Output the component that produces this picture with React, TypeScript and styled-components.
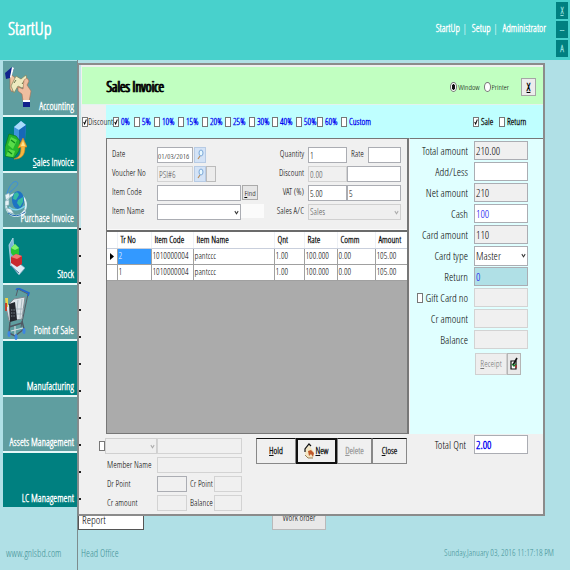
import React from 'react';
import styled, { createGlobalStyle, css } from 'styled-components';

const narrow = '"Open Sans Condensed Light", "Roboto Condensed", "Liberation Sans", sans-serif';

const Global = createGlobalStyle`
  *, *::before, *::after { box-sizing: border-box; }
  body { margin: 0; background: #b0e0e6; font-family: ${narrow}; font-size: 9px; line-height: 12px; color: #000; }
  button, input, select { font: inherit; color: inherit; margin: 0; border-radius: 0; min-width: 0; }
  a { color: inherit; text-decoration: none; }
  h1, h2 { margin: 0; font-weight: 700; }
`;

/* ---------- page frame ---------- */
const Page = styled.div`
  min-height: 100vh;
  display: flex;
  flex-direction: column;
`;
const TopBar = styled.header`
  display: flex;
  align-items: center;
  height: 60px;
  padding: 0 2px 4px 8px;
  background: #48d1cc;
  color: #fff;
`;
const Brand = styled.h1`
  flex: 1;
  font-size: 18px;
  line-height: 24px;
  font-weight: 700;
`;
const TopLinks = styled.nav`
  display: flex;
  gap: 3px;
  margin-right: 10px;
  font-size: 10px;
  font-weight: 700;
  white-space: nowrap;
  span { font-weight: 400; margin-right: 2px; }
`;
const WindowKeys = styled.div`
  display: flex;
  flex-direction: column;
  gap: 2px;
  padding-top: 3px;
`;
const WindowKey = styled.button`
  width: 12px;
  height: 17px;
  padding: 0;
  border: 0;
  background: #008080;
  color: #8fdfdb;
  font-size: 9px;
  font-weight: 700;
`;
const Body = styled.div`
  flex: 1;
  display: flex;
`;
const Side = styled.aside`
  flex: 0 0 78px;
  min-width: 0;
  display: flex;
  flex-direction: column;
  justify-content: space-between;
  padding: 1px 0 0 3px;
  border-right: 1px solid #7d8c8e;
`;
const Menu = styled.nav`
  display: flex;
  flex-direction: column;
  gap: 2px;
  background: #e4f7f7;
`;
const MenuItem = styled.a<{ $dark?: boolean }>`
  display: flex;
  height: 54px;
  position: relative;
  align-items: flex-end;
  justify-content: flex-end;
  padding: 0 3px 3px 0;
  background: ${p => (p.$dark ? '#008080' : '#5f9ea0')};
  color: #fff;
  font-size: 10px;
  font-weight: 700;
  white-space: nowrap;
  svg { position: absolute; left: 2px; top: 3px; }
  span { position: relative; }
`;
const FootText = styled.div<{ $small?: boolean }>`
  padding: 0 4px 11px 3px;
  font-size: ${p => (p.$small ? 9 : 10)}px;
  color: #3f9095;
  white-space: nowrap;
`;
const Main = styled.main`
  flex: 1;
  min-width: 0;
  display: flex;
  flex-direction: column;
`;
const Behind = styled.div`
  display: flex;
  justify-content: space-between;
  height: 14px;
  padding-right: 244px;
`;
const Peek = styled.button<{ $raised?: boolean }>`
  display: flex;
  align-items: flex-end;
  justify-content: ${p => (p.$raised ? 'center' : 'flex-start')};
  width: ${p => (p.$raised ? 54 : 66)}px;
  height: 14px;
  padding: 0 3px ${p => (p.$raised ? 5 : 3)}px;
  overflow: hidden;
  border: 1px solid ${p => (p.$raised ? '#b9b9b9' : '#555')};
  border-top: 0;
  background: ${p => (p.$raised ? '#e8e8e8' : '#fff')};
  font-size: ${p => (p.$raised ? 9 : 11)}px;
  line-height: 12px;
`;
const StatusBar = styled.footer`
  flex: 1;
  display: flex;
  align-items: flex-end;
  justify-content: space-between;
  padding-right: 12px;
`;

/* ---------- invoice window ---------- */
const Invoice = styled.section`
  display: flex;
  margin: 3px 25px 0 0;
  border: solid #8b8b8b;
  border-width: 2px 2px 2px 1px;
  background: #f0f0f0;
`;
const Rail = styled.div`
  flex: 0 0 3px;
  padding-top: 163px;
  background: linear-gradient(#c4e6ea, #c4e6ea) 0 0 / 2px 163px no-repeat;
  &::after {
    content: '';
    display: block;
    width: 2px;
    height: 276px;
    background: repeating-linear-gradient(#222 0 2px, transparent 2px 27px);
  }
`;
const Sheet = styled.div`
  flex: 1;
  min-width: 0;
  padding-top: 2px;
`;
const TitleBar = styled.div`
  display: flex;
  align-items: center;
  height: 38px;
  padding: 3px 7px 0 24px;
  background: #c1ffc1;
  border-bottom: 1px solid #e4f3ee;
`;
const Title = styled.h2`
  flex: 1;
  font-size: 14px;
  line-height: 20px;
  color: #000;
  text-shadow: 1px 0 0 #000;
`;
const Choice = styled.label`
  display: flex;
  align-items: center;
  gap: 1px;
  margin-right: 4px;
  font-size: 8px;
`;
const mark = (shape: string) =>
  `url("data:image/svg+xml,%3Csvg xmlns='http://www.w3.org/2000/svg' viewBox='0 0 6 10' preserveAspectRatio='none'%3E${shape}%3C/svg%3E")`;
const tick = mark("%3Cpath d='M1 5l1.5 2.5L5 2' fill='none' stroke='%23000' stroke-width='1.4'/%3E");
const arrow = (colour: string) =>
  mark(`%3Cpath d='M1 3.5l2 3 2-3' fill='none' stroke='%23${colour}' stroke-width='1.2'/%3E`);
const Radio = styled.input.attrs({ type: 'radio' })`
  appearance: none;
  width: 7px;
  height: 10px;
  border: 1px solid #777;
  border-radius: 50%;
  background: #fff;
  &:checked { background: radial-gradient(ellipse, #111 45%, #fff 55%); }
`;
const Check = styled.input.attrs({ type: 'checkbox' })`
  appearance: none;
  flex: none;
  width: 6px;
  height: 10px;
  border: 1px solid #777;
  background: #fff;
  &:checked { background: #fff ${tick} center / 100% 100% no-repeat; }
`;
const CloseKey = styled.button`
  width: 15px;
  height: 18px;
  margin-left: 8px;
  padding: 0;
  border: 1px solid #a5a5a5;
  background: #ececec;
  font-weight: 700;
  font-size: 11px;
  color: #000;
`;
const Rates = styled.div`
  display: flex;
  align-items: center;
  height: 33px;
  padding-right: 14px;
  background: #bfffff;
`;
const Rate = styled.label<{ $w: number; $tone?: 'plain' | 'black' }>`
  display: flex;
  align-items: center;
  gap: 2px;
  flex: 0 0 ${p => p.$w}px;
  white-space: nowrap;
  font-weight: 700;
  color: #0000f0;
  ${p => p.$tone === 'black' && css`color: #111;`}
  ${p => p.$tone === 'plain' && css`
    gap: 0;
    height: 33px;
    min-width: 0;
    color: #000;
    font-weight: 400;
    background: linear-gradient(90deg, #f0f0f0 24px, transparent 24px);
  `}
`;
const Push = styled.span`
  flex: 1;
`;
const Middle = styled.div`
  display: flex;
  padding-left: 24px;
`;
const Work = styled.div`
  flex: 1;
  min-width: 0;
  border: solid #777;
  border-width: 1px 2px 1px 1px;
  display: flex;
  flex-direction: column;
`;
const Form = styled.div`
  display: flex;
  justify-content: space-between;
  padding: 8px 6px 9px 5px;
  border-bottom: 1px solid #fafafa;
`;
const Col = styled.div`
  display: flex;
  flex-direction: column;
  gap: 3px;
`;
const Line = styled.div<{ $label: number; $right?: boolean }>`
  display: grid;
  grid-template-columns: ${p => p.$label}px 1fr;
  column-gap: ${p => (p.$right ? 4 : 0)}px;
  height: 16px;
  white-space: nowrap;
  > label { text-align: ${p => (p.$right ? 'right' : 'left')}; line-height: 14px; }
  > div { display: flex; }
`;
const Field = styled.input<{ $w: number; $tall?: boolean; $blue?: boolean }>`
  flex: 0 0 ${p => p.$w}px;
  width: ${p => p.$w}px;
  height: ${p => (p.$tall ? 19 : 16)}px;
  padding: 0 1px;
  border: 1px solid #abadb3;
  background: #fff;
  color: ${p => (p.$blue ? '#0000f0' : '#000')};
  font-size: ${p => (p.$tall ? 11 : 9)}px;
  &:read-only { background: #f0f0f0; }
  &:disabled { background: #f0f0f0; border-color: #d3d3d3; color: #555; }
`;
const DateField = styled(Field)`
  padding: 0;
  font-size: 8px;
`;
const ReturnField = styled(Field)`
  &:read-only { background: #b0e0e6; }
`;
const Pick = styled.select<{ $w: number; $tall?: boolean }>`
  appearance: none;
  flex: 0 0 ${p => p.$w}px;
  width: ${p => p.$w}px;
  height: ${p => (p.$tall ? 20 : 16)}px;
  padding: 0 8px 0 1px;
  border: 1px solid #abadb3;
  font-size: ${p => (p.$tall ? 11 : 9)}px;
  background: #fff ${arrow('333')} right 1px center / 5px 9px no-repeat;
  &:disabled {
    background: #efefef ${arrow('aaa')} right 1px center / 5px 9px no-repeat;
    border-color: #d0d0d0;
    color: #555;
    opacity: 1;
  }
`;
const Lookup = styled.button<{ $plain?: boolean }>`
  width: ${p => (p.$plain ? 10 : 12)}px;
  height: 16px;
  margin-left: ${p => (p.$plain ? 0 : 1)}px;
  padding: 0;
  border: 1px solid ${p => (p.$plain ? '#bbb' : '#b7cbe4')};
  background: ${p => (p.$plain ? '#ececec' : '#d4e3f6')};
`;
const Find = styled.button`
  width: 16px;
  height: 15px;
  margin-left: 1px;
  padding: 0;
  border: 1px solid #aaa;
  background: #e6e6e6;
  font-size: 8px;
`;
const Blank = styled.span`
  width: 23px;
  height: 14px;
  background: #fbfbfb;
`;
const InlineLabel = styled.label<{ $w: number }>`
  flex: 0 0 ${p => p.$w}px;
  padding-left: 4px;
  line-height: 14px;
`;
const GridArea = styled.div`
  flex: 1;
  min-height: 203px;
  border-top: 2px solid #6b6b6b;
  background: #ababab;
`;
const Table = styled.table`
  width: 100%;
  table-layout: fixed;
  border-collapse: collapse;
  background: #fff;
  th, td {
    height: 16px;
    padding: 0 1px;
    border: solid #a0a0a0;
    border-width: 0 1px 1px 0;
    text-align: left;
    white-space: nowrap;
    overflow: hidden;
  }
  thead th { border-color: #c9cfdc; border-right-color: #eef1f6; padding-left: 3px; color: #111; }
  tbody th { padding: 0; text-align: center; }
  th:last-child, td:last-child { border-right: 0; }
  svg { display: block; margin: 0 auto; }
`;
const Cell = styled.td<{ $on?: boolean }>`
  ${p => p.$on && css`background: #3399ff; color: #fff;`}
`;
const Payment = styled.div`
  flex: 0 0 134px;
  display: flex;
  flex-direction: column;
  gap: 2px;
  padding: 2px 15px 0 0;
  border-top: 1px solid #777;
  border-left: 1px solid #f4f4f4;
  background: #e0ffff;
`;
const PayLine = styled.div`
  display: flex;
  align-items: center;
  justify-content: flex-end;
  gap: 6px;
  height: 19px;
  font-size: 11px;
  white-space: nowrap;
  ${Check} { margin-right: -3px; }
`;
const ReceiptLine = styled.div`
  display: flex;
  justify-content: flex-end;
  margin-top: 2px;
  padding-right: 7px;
`;
const ReceiptKey = styled.button<{ $w: number }>`
  display: flex;
  align-items: center;
  justify-content: center;
  width: ${p => p.$w}px;
  height: 22px;
  padding: 0;
  border: 1px solid #b5b5b5;
  background: #e9e9e9;
  &:disabled { color: #777; background: #eee; border-color: #d0d0d0; }
`;
const Bottom = styled.div`
  display: flex;
  align-items: flex-start;
  padding: 4px 15px 3px 17px;
`;
const MemberRow = styled.div`
  display: flex;
  align-items: center;
  height: 16px;
  white-space: nowrap;
`;
const MemberLabel = styled.label<{ $w: number; $lead?: boolean }>`
  flex: 0 0 ${p => p.$w}px;
  padding-left: ${p => (p.$lead ? 8 : 3)}px;
`;
const Actions = styled.div`
  display: flex;
  flex: 1;
  margin-left: 14px;
`;
const Action = styled.button<{ $w: number; $focus?: boolean }>`
  display: flex;
  align-items: center;
  justify-content: center;
  flex: 0 0 ${p => p.$w}px;
  height: 26px;
  padding: 0;
  border: 1px solid #888;
  border-top-color: #111;
  background: #f0f0f0;
  font-weight: 700;
  color: #111;
  ${p => p.$focus && css`border: 2px solid #111;`}
  &:disabled { color: #999; }
`;
const Total = styled.div`
  display: flex;
  align-items: center;
  gap: 8px;
  margin-top: -3px;
  font-size: 11px;
  white-space: nowrap;
`;
const TotalField = styled(Field)`
  font-weight: 700;
`;

/* ---------- drawings ---------- */
const HandsIcon = () => (
  <svg width="27" height="44" viewBox="0 0 27 44" aria-hidden="true">
    <path d="M4 9 9 13 17 18 14 24 10 24 7 28 5 25 5 16z" fill="#efc3a0" stroke="#9c6c50" strokeWidth=".6" />
    <path d="M0 9 7 3 9 5 5 14 1 15z" fill="#10228c" />
    <path d="M5 13 7 3 9 4 6 14z" fill="#fff" />
    <path d="M6 22 11 12 16 15 21 11 23 20 17 24 13 22 9 29z" fill="#eeeac0" stroke="#7d835c" strokeWidth=".7" />
    <path d="M9 19l2-3M17 20l3-4" stroke="#68704a" />
    <path d="M19 16 22 14 24 17 22 21 26 27 24 38 18 37 17 30 13 27 13 23 18 25z" fill="#efbea0" stroke="#a86f52" strokeWidth=".6" />
    <path d="M18 36h7v2h-7z" fill="#fff" />
    <path d="M18 38h7v5h-7z" fill="#10228c" />
  </svg>
);
const CubeCashIcon = () => (
  <svg width="22" height="40" viewBox="0 0 22 40" aria-hidden="true">
    <path d="M9 7 16 1 21 5 20 20 14 25 9 19z" fill="#3f94dd" />
    <path d="M9 7 16 1 21 5 14 10z" fill="#a9dcfb" />
    <path d="M14 10 21 5 20 20 14 25z" fill="#1768b8" />
    <path d="M0 27 4 14 11 16 15 21 14 31 9 38 0 36z" fill="#24b42c" stroke="#0d7a1a" strokeWidth=".7" />
    <path d="M3 25 6 17 12 20 8 29zM1 36l3-7 6 2-2 6z" fill="#58dc48" />
    <path d="M6 20l4 3M3 31l4 3" stroke="#0d8a1c" strokeWidth="1.4" />
    <path d="M9 39C15 37 16 34 16 27L13 28 18 18 22 27 20 27C20 35 17 39 9 39z" fill="#f6b640" stroke="#d88416" strokeWidth=".6" />
    <path d="M16 26l2-5 2 5z" fill="#ffe28d" />
  </svg>
);
const GlobeIcon = () => (
  <svg width="22" height="46" viewBox="0 -4 22 46" aria-hidden="true">
    <path d="M2 14C4 5 9 0 12 2S9 9 4 13" fill="none" stroke="#3a8ee0" />
    <ellipse cx="11" cy="25" rx="10" ry="11" fill="none" stroke="#dceff4" strokeWidth="1.8" />
    <path d="M0 15l4-2 1 4-4 3zM0 21l4-1v5l-4 1zM1 28l5 1 3 5-6-2zM15 34l5-5 1 4-4 4z" fill="#e6f2f5" stroke="#85aebc" strokeWidth=".6" />
    <ellipse cx="13" cy="20" rx="6" ry="9" fill="#1d73c4" />
    <path d="M9 14q4-4 5 1l-3 5-3-1zM13 20l5-3v5l-3 5-3-4z" fill="#36bba0" />
    <path d="M4 27q7 6 16-1" fill="none" stroke="#7bd4ef" strokeWidth="1.4" />
    <path d="M3 33q8 6 17-1" fill="none" stroke="#1c65b0" />
  </svg>
);
const BlocksIcon = () => (
  <svg width="20" height="46" viewBox="-1 -5 20 46" aria-hidden="true">
    <path d="M3 8 7 1 8 18 5 29z" fill="#78b2d8" stroke="#cfe7f5" strokeWidth=".7" />
    <path d="M4 27 8 22 19 31 13 38z" fill="#dcebf5" stroke="#7ba3be" strokeWidth=".7" />
    <path d="M5 29 13 36" stroke="#477ba0" />
    <path d="M5 11 9 7 13 11 13 18 8 20 5 16z" fill="#28c332" />
    <path d="M5 11 9 7 13 11 9 13z" fill="#83ef6c" />
    <path d="M5 20 10 17 16 19 16 27 11 30 5 26z" fill="#c92a2e" />
    <path d="M5 20 10 17 16 19 11 22z" fill="#f07a72" />
  </svg>
);
const CartIcon = () => (
  <svg width="26" height="52" viewBox="0 0 26 52" aria-hidden="true">
    <path d="M11 8 13 1 23 6 16 39" fill="none" stroke="#555b66" />
    <path d="M11 2 13 0 24 5 23 8" fill="none" stroke="#2166d0" strokeWidth="1.6" />
    <path d="M9 11 20 9 17 31 4 33 1 19z" fill="#dde5e9" stroke="#828b92" />
    <path d="M13 12l-2 19M17 11l-2 19M9 21h10M9 26h9" stroke="#a2b1b9" strokeWidth=".8" />
    <path d="M0 10h3v9H1z" fill="#e8d24a" /><path d="M0 15h2v8H0z" fill="#c3412e" />
    <path d="M4 16 10 14 12 32 5 34z" fill="#24282e" />
    <path d="M6 22h4M6 25h4M6 28h4" stroke="#7b858e" strokeDasharray="1 .6" />
    <path d="M5 34 4 45 10 48 19 41 17 33M4 39l13-4" fill="none" stroke="#4f5862" strokeWidth="1.4" />
    <path d="M6 43l12-3M10 47V38" stroke="#dde3e7" />
    <ellipse cx="4" cy="46" rx="1.5" ry="3" fill="#3c86e4" /><ellipse cx="11" cy="49" rx="1.5" ry="3" fill="#3c86e4" /><ellipse cx="19" cy="43" rx="1.5" ry="3" fill="#3c86e4" />
  </svg>
);
const LensIcon = () => (
  <svg width="8" height="12" viewBox="0 0 8 12" aria-hidden="true">
    <ellipse cx="5" cy="5" rx="2" ry="3" fill="#e7f8ff" stroke="#7da9d8" />
    <path d="M4 8 2 11" stroke="#b88c5c" strokeWidth="1.2" />
  </svg>
);
const PageIcon = () => (
  <svg width="11" height="17" viewBox="0 0 11 17" aria-hidden="true">
    <path d="M1 7 5 2 10 9 9 15 4 15 1 11z" fill="#f3e6c4" />
    <path d="M1 9 1 6 5 1 7 3" fill="none" stroke="#111" strokeWidth="1.2" />
    <path d="M4 8l3-1 3 3-1 4-2-3-2 2z" fill="#bf5a2c" />
    <path d="M1 12l3 3h5" stroke="#998058" fill="none" />
  </svg>
);
const SlipIcon = () => (
  <svg width="8" height="14" viewBox="0 0 8 14" aria-hidden="true">
    <path d="M1 4h5v8H1z" fill="#fff" stroke="#111" strokeWidth="1.2" />
    <path d="M3 8 7 1" stroke="#111" strokeWidth="1.6" />
    <path d="M2 7l2 2 2-2" stroke="#1b7c2c" strokeWidth="1.4" fill="none" />
    <path d="M6 8v3" stroke="#b32222" strokeWidth="1.2" />
  </svg>
);

/* ---------- data ---------- */
const menu = [
  { name: 'Accounting', icon: <HandsIcon /> },
  { name: 'Sales Invoice', icon: <CubeCashIcon />, key: true },
  { name: 'Purchase Invoice', icon: <GlobeIcon /> },
  { name: 'Stock', icon: <BlocksIcon /> },
  { name: 'Point of Sale', icon: <CartIcon /> },
  { name: 'Manufacturing' },
  { name: 'Assets Management' },
  { name: 'LC Management' },
];
const rates: [string, number][] = [
  ['0%', 21], ['5%', 20], ['10%', 24], ['15%', 24], ['20%', 23], ['25%', 24],
  ['30%', 23], ['40%', 24], ['50%', 21], ['60%', 24], ['Custom', 32],
];
const columns: [string, number | undefined][] = [
  ['Tr No', 34], ['Item Code', 42], ['Item Name', undefined], ['Qnt', 30], ['Rate', 33], ['Comm', 38], ['Amount', 32],
];
const rows = [
  ['2', '1010000004', 'pantccc', '1.00', '100.000', '0.00', '105.00'],
  ['1', '1010000004', 'pantccc', '1.00', '100.000', '0.00', '105.00'],
];

const Key = ({ text }: { text: string }) => (<span><u>{text[0]}</u>{text.slice(1)}</span>);

export default function App() {
  return (
    <Page>
      <Global />
      <TopBar>
        <Brand>StartUp</Brand>
        <TopLinks>
          <a href="#startup">StartUp</a><span>|</span>
          <a href="#setup">Setup</a><span>|</span>
          <a href="#administrator">Administrator</a>
        </TopLinks>
        <WindowKeys>
          <WindowKey aria-label="Close application"><u>X</u></WindowKey>
          <WindowKey aria-label="Minimize">--</WindowKey>
          <WindowKey>A</WindowKey>
        </WindowKeys>
      </TopBar>
      <Body>
        <Side>
          <Menu>
            {menu.map((m, i) => (
              <MenuItem key={m.name} href="#menu" $dark={i % 2 === 1}>
                {m.icon}
                {m.key ? <Key text={m.name} /> : <span>{m.name}</span>}
              </MenuItem>
            ))}
          </Menu>
          <FootText>www.gnlsbd.com</FootText>
        </Side>
        <Main>
          <Invoice>
            <Rail />
            <Sheet>
              <TitleBar>
                <Title>Sales Invoice</Title>
                <Choice><Radio name="out" defaultChecked />Window</Choice>
                <Choice><Radio name="out" />Printer</Choice>
                <CloseKey aria-label="Close invoice"><u>X</u></CloseKey>
              </TitleBar>
              <Rates>
                <Rate $w={31} $tone="plain"><Check defaultChecked />Discount</Rate>
                {rates.map(([name, w], i) => (
                  <Rate key={name} $w={w}><Check defaultChecked={i === 0} />{name}</Rate>
                ))}
                <Push />
                <Rate $w={26} $tone="black"><Check defaultChecked />Sale</Rate>
                <Rate $w={30} $tone="black"><Check />Return</Rate>
              </Rates>
              <Middle>
                <Work>
                  <Form>
                    <Col>
                      <Line $label={45}>
                        <label htmlFor="date">Date</label>
                        <div><DateField id="date" $w={36} defaultValue="01/03/2016" /><Lookup aria-label="Pick date"><LensIcon /></Lookup></div>
                      </Line>
                      <Line $label={45}>
                        <label htmlFor="voucher">Voucher No</label>
                        <div>
                          <Field id="voucher" $w={36} disabled defaultValue="PSI#6" />
                          <Lookup aria-label="Find voucher"><LensIcon /></Lookup>
                          <Lookup $plain aria-label="Voucher options" />
                        </div>
                      </Line>
                      <Line $label={45}>
                        <label htmlFor="code">Item Code</label>
                        <div><Field id="code" $w={84} /><Find><u>F</u>ind</Find></div>
                      </Line>
                      <Line $label={45}>
                        <label htmlFor="item">Item Name</label>
                        <div><Pick id="item" $w={84}><option></option></Pick><Blank /></div>
                      </Line>
                    </Col>
                    <Col>
                      <Line $label={36} $right>
                        <label htmlFor="qty">Quantity</label>
                        <div><Field id="qty" $w={39} defaultValue="1" /><InlineLabel $w={21} htmlFor="rate">Rate</InlineLabel><Field id="rate" $w={33} /></div>
                      </Line>
                      <Line $label={36} $right>
                        <label htmlFor="disc">Discount</label>
                        <div><Field id="disc" $w={39} disabled defaultValue="0.00" /><Field aria-label="Discount amount" $w={54} /></div>
                      </Line>
                      <Line $label={36} $right>
                        <label htmlFor="vat">VAT (%)</label>
                        <div><Field id="vat" $w={39} defaultValue="5.00" /><Field aria-label="VAT amount" $w={54} defaultValue="5" /></div>
                      </Line>
                      <Line $label={36} $right>
                        <label htmlFor="account">Sales A/C</label>
                        <div><Pick id="account" $w={93} disabled><option>Sales</option></Pick></div>
                      </Line>
                    </Col>
                  </Form>
                  <GridArea>
                    <Table>
                      <colgroup>
                        <col width={10} />
                        {columns.map(([name, w]) => <col key={name} width={w} />)}
                      </colgroup>
                      <thead>
                        <tr><th aria-label="Current row" />{columns.map(([name]) => <th key={name}>{name}</th>)}</tr>
                      </thead>
                      <tbody>
                        {rows.map((r, i) => (
                          <tr key={i}>
                            <th scope="row">{i === 0 && <svg width="4" height="7" viewBox="0 0 4 7"><path d="M0 0 4 3.5 0 7z" /></svg>}</th>
                            {r.map((v, j) => <Cell key={j} $on={i === 0 && j === 0}>{v}</Cell>)}
                          </tr>
                        ))}
                      </tbody>
                    </Table>
                  </GridArea>
                </Work>
                <Payment>
                  <PayLine><label htmlFor="total">Total amount</label><Field id="total" $w={54} $tall readOnly value="210.00" /></PayLine>
                  <PayLine><label htmlFor="add">Add/Less</label><Field id="add" $w={54} $tall /></PayLine>
                  <PayLine><label htmlFor="net">Net amount</label><Field id="net" $w={54} $tall readOnly value="210" /></PayLine>
                  <PayLine><label htmlFor="cash">Cash</label><Field id="cash" $w={54} $tall $blue defaultValue="100" /></PayLine>
                  <PayLine><label htmlFor="card">Card amount</label><Field id="card" $w={54} $tall readOnly value="110" /></PayLine>
                  <PayLine><label htmlFor="type">Card type</label><Pick id="type" $w={54} $tall><option>Master</option></Pick></PayLine>
                  <PayLine><label htmlFor="ret">Return</label><ReturnField id="ret" $w={54} $tall $blue readOnly value="0" /></PayLine>
                  <PayLine><Check id="giftOn" aria-label="Use gift card" /><label htmlFor="gift">Gift Card no</label><Field id="gift" $w={54} $tall disabled /></PayLine>
                  <PayLine><label htmlFor="cr">Cr amount</label><Field id="cr" $w={54} $tall disabled /></PayLine>
                  <PayLine><label htmlFor="bal">Balance</label><Field id="bal" $w={54} $tall disabled /></PayLine>
                  <ReceiptLine>
                    <ReceiptKey $w={32} disabled><Key text="Receipt" /></ReceiptKey>
                    <ReceiptKey $w={14} aria-label="Edit receipt"><SlipIcon /></ReceiptKey>
                  </ReceiptLine>
                </Payment>
              </Middle>
              <Bottom>
                <Col>
                  <MemberRow>
                    <Check aria-label="Use member" />
                    <Pick aria-label="Member" $w={52} disabled><option></option></Pick>
                    <Field aria-label="Member code" $w={85} disabled />
                  </MemberRow>
                  <MemberRow><MemberLabel $w={58} $lead htmlFor="member">Member Name</MemberLabel><Field id="member" $w={85} disabled /></MemberRow>
                  <MemberRow>
                    <MemberLabel $w={58} $lead htmlFor="drp">Dr Point</MemberLabel><Field id="drp" $w={30} readOnly />
                    <MemberLabel $w={27} htmlFor="crp">Cr Point</MemberLabel><Field id="crp" $w={28} disabled />
                  </MemberRow>
                  <MemberRow>
                    <MemberLabel $w={58} $lead htmlFor="cra">Cr amount</MemberLabel><Field id="cra" $w={30} disabled />
                    <MemberLabel $w={27} htmlFor="mbal">Balance</MemberLabel><Field id="mbal" $w={28} disabled />
                  </MemberRow>
                </Col>
                <Actions>
                  <Action $w={40}><Key text="Hold" /></Action>
                  <Action $w={41} $focus><PageIcon /><Key text="New" /></Action>
                  <Action $w={35} disabled><Key text="Delete" /></Action>
                  <Action $w={35}><Key text="Close" /></Action>
                </Actions>
                <Total><label htmlFor="tq">Total Qnt</label><TotalField id="tq" $w={54} $tall $blue defaultValue="2.00" /></Total>
              </Bottom>
            </Sheet>
          </Invoice>
          <Behind>
            <Peek>Report</Peek>
            <Peek $raised>Work order</Peek>
          </Behind>
          <StatusBar>
            <FootText>Head Office</FootText>
            <FootText $small>Sunday,January 03, 2016 11:17:18 PM</FootText>
          </StatusBar>
        </Main>
      </Body>
    </Page>
  );
}
